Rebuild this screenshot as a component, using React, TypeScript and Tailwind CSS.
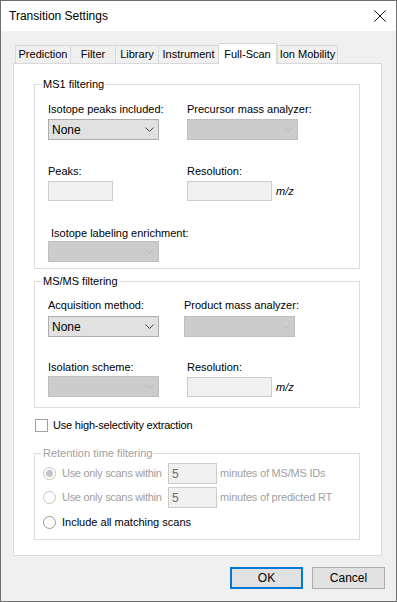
import React from 'react';

const font = { fontFamily: '"Liberation Sans", Arial, sans-serif' };

function Chevron({ disabled }: { disabled?: boolean }) {
  return (
    <svg width="9" height="5" viewBox="0 0 9 5" className="mr-[4px] shrink-0">
      <path d="M0.5 0.5 L4.5 4.5 L8.5 0.5" fill="none" stroke={disabled ? '#b8b8b8' : '#444444'} strokeWidth="1" />
    </svg>
  );
}

function Combo({ value, disabled, className = '' }: { value?: string; disabled?: boolean; className?: string }) {
  return (
    <div
      className={`flex items-center h-[21px] w-[111px] border ${
        disabled ? 'bg-[#cccccc] border-[#bfbfbf]' : 'bg-[#e1e1e1] border-[#adadad]'
      } ${className}`}
    >
      <span className="flex-1 pl-[3px] text-black text-[12px]">{value}</span>
      <Chevron disabled={disabled} />
    </div>
  );
}

function TextBox({ value, w = 'w-[85px]', h = 'h-[20px]' }: { value?: string; w?: string; h?: string }) {
  return (
    <div className={`${w} ${h} shrink-0 border border-[#cccccc] bg-[#f0f0f0] flex items-center pl-[3px] text-[12px] text-[#6d6d6d]`}>
      {value}
    </div>
  );
}

function Group({ title, disabled, className = '', children }: { title: string; disabled?: boolean; className?: string; children: React.ReactNode }) {
  return (
    <div className={`relative border border-[#dcdcdc] ${className}`}>
      <span className={`absolute -top-[8px] left-[7px] bg-white px-[1px] leading-[14px] whitespace-nowrap ${disabled ? 'text-[#a0a0a0]' : 'text-black'}`}>
        {title}
      </span>
      {children}
    </div>
  );
}

function Radio({ checked, disabled }: { checked?: boolean; disabled?: boolean }) {
  return (
    <div className={`w-[13px] h-[13px] shrink-0 rounded-full border bg-white flex items-center justify-center ${disabled ? 'border-[#c4c4c4]' : 'border-[#9a9a9a]'}`}>
      {checked && <div className="w-[7px] h-[7px] rounded-full bg-[#c4c4c4]" />}
    </div>
  );
}

const tabs = [
  { label: 'Prediction', w: 'w-[55px]' },
  { label: 'Filter', w: 'w-[45px]' },
  { label: 'Library', w: 'w-[43px]' },
  { label: 'Instrument', w: 'w-[60px]' },
  { label: 'Full-Scan', w: 'w-[59px]', active: true },
  { label: 'Ion Mobility', w: 'w-[61px]' },
];

export default function App() {
  return (
    <div style={font} className="w-[397px] h-[602px] border border-[#707070] bg-[#f0f0f0] flex flex-col text-[11px] text-black overflow-hidden whitespace-nowrap">
      {/* Title bar */}
      <div className="h-[30px] bg-white flex items-center justify-between pl-[8px] pr-[10px] shrink-0">
        <span className="text-[12px]">Transition Settings</span>
        <svg width="12" height="12" viewBox="0 0 12 12">
          <path d="M0.5 0.5 L11.5 11.5 M11.5 0.5 L0.5 11.5" stroke="#111" strokeWidth="1" />
        </svg>
      </div>

      <div className="flex flex-col pt-[12px] px-[12px]">
        {/* Tabs */}
        <div className="flex items-end h-[20px] pl-[2px] relative z-10">
          {tabs.map((t) =>
            t.active ? (
              <div key={t.label} className={`${t.w} h-[21px] -mb-[1px] bg-white border border-b-0 border-[#d9d9d9] flex items-center justify-center`}>
                {t.label}
              </div>
            ) : (
              <div key={t.label} className={`${t.w} h-[18px] bg-[#f0f0f0] border border-r-0 last:border-r border-b-0 border-[#d9d9d9] flex items-center justify-center`}>
                {t.label}
              </div>
            )
          )}
        </div>

        {/* Tab panel */}
        <div className="h-[493px] w-[369px] bg-white border border-[#d9d9d9] flex flex-col pl-[20px] pt-[20px]">
          <Group title="MS1 filtering" className="w-[326px] h-[185px] pl-[13px]">
            <div className="grid grid-cols-[139px_1fr] mt-[17px]">
              <div>
                <div className="leading-[14px]">Isotope peaks included:</div>
                <Combo value="None" className="mt-[3px]" />
              </div>
              <div>
                <div className="leading-[14px]">Precursor mass analyzer:</div>
                <Combo disabled className="mt-[3px]" />
              </div>
            </div>
            <div className="grid grid-cols-[139px_1fr] mt-[24px]">
              <div>
                <div className="leading-[14px]">Peaks:</div>
                <div className="mt-[3px]">
                  <TextBox w="w-[65px]" />
                </div>
              </div>
              <div>
                <div className="leading-[14px]">Resolution:</div>
                <div className="flex items-center gap-[4px] mt-[3px]">
                  <TextBox />
                  <span className="italic">m/z</span>
                </div>
              </div>
            </div>
            <div className="mt-[25px]">
              <div className="leading-[14px] ml-[3px]">Isotope labeling enrichment:</div>
              <Combo disabled className="mt-[1px]" />
            </div>
          </Group>

          <Group title="MS/MS filtering" className="w-[326px] h-[127px] pl-[13px] mt-[12px]">
            <div className="grid grid-cols-[136px_1fr] mt-[16px]">
              <div>
                <div className="leading-[14px]">Acquisition method:</div>
                <Combo value="None" className="mt-[4px]" />
              </div>
              <div>
                <div className="leading-[14px]">Product mass analyzer:</div>
                <Combo disabled className="mt-[4px]" />
              </div>
            </div>
            <div className="grid grid-cols-[139px_1fr] mt-[23px]">
              <div>
                <div className="leading-[14px]">Isolation scheme:</div>
                <Combo disabled className="mt-[2px]" />
              </div>
              <div>
                <div className="leading-[14px]">Resolution:</div>
                <div className="flex items-center gap-[4px] mt-[3px]">
                  <TextBox />
                  <span className="italic">m/z</span>
                </div>
              </div>
            </div>
          </Group>

          <div className="flex items-center mt-[10px] ml-[1px] h-[14px]">
            <div className="w-[13px] h-[13px] border border-[#a0a0a0] bg-white" />
            <span className="ml-[5px] tracking-[-0.2px]">Use high-selectivity extraction</span>
          </div>

          <Group title="Retention time filtering" disabled className="w-[326px] h-[87px] mt-[21px] pl-[8px] text-[#a0a0a0]">
            <div className="flex flex-col mt-[9px]">
              <div className="flex items-center h-[21px]">
                <Radio checked disabled />
                <span className="ml-[6px] w-[106px] tracking-[-0.3px]">Use only scans within</span>
                <TextBox value="5" w="w-[49px]" h="h-[21px]" />
                <span className="ml-[3px] tracking-[-0.2px]">minutes of MS/MS IDs</span>
              </div>
              <div className="flex items-center h-[21px] mt-[3px]">
                <Radio disabled />
                <span className="ml-[6px] w-[106px] tracking-[-0.3px]">Use only scans within</span>
                <TextBox value="5" w="w-[49px]" h="h-[21px]" />
                <span className="ml-[3px] tracking-[-0.2px]">minutes of predicted RT</span>
              </div>
              <div className="flex items-center h-[21px] mt-[4px]">
                <Radio />
                <span className="ml-[6px] text-black">Include all matching scans</span>
              </div>
            </div>
          </Group>
        </div>

        {/* Buttons */}
        <div className="flex justify-end gap-[9px] mt-[11px] -mr-[1px]">
          <button className="w-[73px] h-[22px] border-2 border-[#0078d7] bg-[#e1e1e1] flex items-center justify-center text-[12px]">OK</button>
          <button className="w-[73px] h-[22px] border border-[#adadad] bg-[#e1e1e1] flex items-center justify-center text-[12px]">Cancel</button>
        </div>
      </div>
    </div>
  );
}
